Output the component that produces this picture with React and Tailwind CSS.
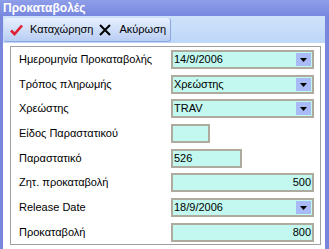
import React from "react";

const font = { fontFamily: '"Liberation Sans", Arial, sans-serif' };

const Arrow = () => (
  <div className="absolute right-[1px] top-[1px] bottom-[1px] w-[15px] bg-[#a8bbf6] flex items-center justify-center">
    <svg width="7" height="5" viewBox="0 0 7 5">
      <path d="M0 1h7L3.5 5z" fill="#000" />
    </svg>
  </div>
);

const Field = ({ value, width = "w-[143px]", right, combo }) => (
  <div
    className={`relative h-[19px] ${width} bg-[#c2f8ef] border-2 border-[#aeab9e] flex items-center text-[11px] text-black leading-none ${
      right ? "justify-end pr-[1px]" : "pl-[1px]"
    }`}
  >
    <span>{value}</span>
    {combo && <Arrow />}
  </div>
);

const rows = [
  { label: "Ημερομηνία Προκαταβολής", value: "14/9/2006", combo: true },
  { label: "Τρόπος πληρωμής", value: "Χρεώστης", combo: true },
  { label: "Χρεώστης", value: "TRAV", combo: true },
  { label: "Είδος Παραστατικού", value: "", width: "w-[39px]" },
  { label: "Παραστατικό", value: "526", width: "w-[71px]" },
  { label: "Ζητ. προκαταβολή", value: "500", right: true },
  { label: "Release Date", value: "18/9/2006", combo: true },
  { label: "Προκαταβολή", value: "800", right: true },
];

export default function App() {
  return (
    <div
      className="w-[329px] h-[249px] overflow-hidden flex flex-col bg-[#7886dc]"
      style={font}
    >
      <div className="h-[16px] shrink-0 bg-gradient-to-b from-[#8f9ee9] to-[#7787de] text-white font-bold text-[12px] leading-[16px] pl-[3px]">
        Προκαταβολές
      </div>
      <div className="flex-1 flex flex-col ml-[3px] mr-[4px]">
        <div className="h-[27px] shrink-0 bg-gradient-to-b from-[#cfe2fb] to-[#bed6f8] flex items-start pt-[2px] pl-[1px]">
          <div className="h-[24px] w-[167px] rounded-[3px] bg-gradient-to-b from-[#e6f0fd] to-[#b9cdf3] border-r border-b border-[#8ea6e0] flex items-center text-[11px] text-black">
            <svg width="13" height="12" viewBox="0 0 13 12" className="ml-[6px]">
              <path d="M1 6.5 L4.5 10 L12 1.5" fill="none" stroke="#e02030" strokeWidth="2.6" />
            </svg>
            <span className="ml-[7px]">Καταχώρηση</span>
            <svg width="12" height="12" viewBox="0 0 12 12" className="ml-[6px]">
              <path d="M1 1 L11 11 M11 1 L1 11" stroke="#000" strokeWidth="2" />
            </svg>
            <span className="ml-[8px]">Ακύρωση</span>
          </div>
        </div>
        <div className="flex-1 bg-white pt-[3px] pl-[7px] pr-[4px]">
          <div className="h-[199px] border border-[#a0a0a0] pt-[3px] pl-[8px] flex flex-col gap-[5.7px]">
            {rows.map((r) => (
              <div key={r.label} className="flex items-center h-[19px]">
                <div className="w-[152px] text-[11px] text-black leading-none">{r.label}</div>
                <Field value={r.value} width={r.width} right={r.right} combo={r.combo} />
              </div>
            ))}
          </div>
        </div>
      </div>
    </div>
  );
}
